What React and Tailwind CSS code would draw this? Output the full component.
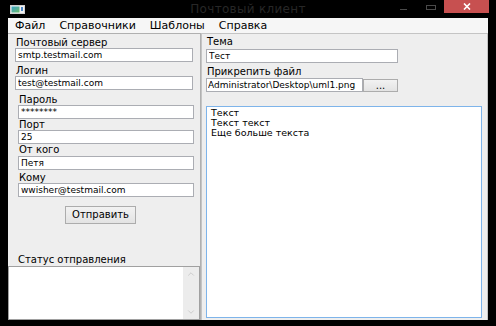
import React from "react";
import { ChevronUp, ChevronDown } from "lucide-react";

function Field({ label, value, className = "", labelClass = "", inputClass = "" }) {
  return (
    <div className={className}>
      <div className={`h-[11px] leading-[11px] ${labelClass}`}>{label}</div>
      <input
        readOnly
        value={value}
        className={`block h-[14px] border border-[#abadb3] bg-white px-[2px] text-[9px] outline-none ${inputClass}`}
      />
    </div>
  );
}

function TitleBar() {
  return (
    <div className="relative h-[18px] flex items-start">
      {/* app icon */}
      <svg className="ml-[10px] mt-[5px]" width="15" height="9" viewBox="0 0 15 9">
        <defs>
          <linearGradient id="ic" x1="0" y1="0" x2="1" y2="1">
            <stop offset="0" stopColor="#3aa3c9" />
            <stop offset="1" stopColor="#6dbb6a" />
          </linearGradient>
        </defs>
        <rect x="0.5" y="0.5" width="14" height="8" fill="#f2f2f2" stroke="#d0d0d0" />
        <rect x="1.5" y="1.5" width="8" height="6" fill="url(#ic)" />
        <rect x="11" y="2" width="2" height="4" fill="#4a87c8" />
      </svg>
      <div className="absolute left-0 right-0 top-[3px] text-center text-[12px] leading-[12px] text-[#272727] tracking-[0.3px]">
        Почтовый клиент
      </div>
      <div className="absolute left-[400px] top-[9px] w-[7px] h-[1px] bg-[#4a4a4a]" />
      <div className="absolute left-[426px] top-[5px] w-[10px] h-[5px] border border-[#4a4a4a]" />
      <div className="absolute left-[444px] top-0 w-[45px] h-[13px] bg-[#c75050] flex items-center justify-center">
        <svg width="8" height="7" viewBox="0 0 8 7">
          <path d="M1 0.5 L7 6.5 M7 0.5 L1 6.5" stroke="#fff" strokeWidth="1.6" />
        </svg>
      </div>
    </div>
  );
}

export default function App() {
  return (
    <div className="w-[496px] h-[326px] bg-black flex flex-col overflow-hidden font-['DejaVu_Sans',sans-serif] text-[10px] text-black">
      <TitleBar />
      <div className="mx-[8px] h-[302px] flex flex-col">
        {/* Menu */}
        <div className="h-[15px] bg-[#f6f6f6] flex items-center gap-[14px] pl-[7px] text-[11px] leading-[15px]">
          <span>Файл</span>
          <span>Справочники</span>
          <span>Шаблоны</span>
          <span>Справка</span>
        </div>

        <div className="flex-1 flex bg-[#eeeeee]">
          {/* Left panel */}
          <div className="w-[193px] border-t border-r border-[#b0b0b0] flex flex-col">
            <Field className="mt-[3px] pl-[7px]" labelClass="pl-[1px]" inputClass="w-[178px]" label="Почтовый сервер" value="smtp.testmail.com" />
            <Field className="mt-[3px] pl-[7px]" labelClass="pl-[1px]" inputClass="w-[178px]" label="Логин" value="test@testmail.com" />
            <Field className="mt-[4px] pl-[10px]" labelClass="pl-[1px]" inputClass="w-[176px]" label="Пароль" value="********" />
            <Field className="pl-[10px]" labelClass="pl-[1px]" inputClass="w-[176px]" label="Порт" value="25" />
            <Field className="pl-[10px]" labelClass="pl-[1px] mb-[1px]" inputClass="w-[176px]" label="От кого" value="Петя" />
            <Field className="mt-[2px] pl-[10px]" labelClass="pl-[1px]" inputClass="w-[176px]" label="Кому" value="wwisher@testmail.com" />

            <button className="mt-[9px] ml-[57px] w-[71px] h-[18px] border border-[#acacac] bg-gradient-to-b from-[#f2f2f2] to-[#e3e3e3] text-[10px] leading-[16px]">
              Отправить
            </button>

            <div className="mt-[30px] pl-[10px] h-[11px] leading-[11px]">Статус отправления</div>
            <div className="mt-[1px] flex-1 border border-[#a0a0a0] bg-white flex justify-end">
              <div className="w-[16px] bg-[#ececec] flex flex-col items-center justify-between py-[2px]">
                <ChevronUp size={10} color="#b8b8b8" strokeWidth={1.5} />
                <ChevronDown size={10} color="#b8b8b8" strokeWidth={1.5} />
              </div>
            </div>
          </div>

          {/* Right panel */}
          <div className="flex-1 border-t border-l border-r border-[#c4c4c4] pl-[4px] flex flex-col">
            <div className="mt-[2px] pl-[1px] h-[11px] leading-[11px]">Тема</div>
            <input
              readOnly
              value="Тест"
              className="mt-[2px] block w-[192px] h-[14px] border border-[#abadb3] bg-white px-[2px] text-[9px] outline-none"
            />
            <div className="mt-[3px] pl-[1px] h-[11px] leading-[11px]">Прикрепить файл</div>
            <div className="mt-[1px] flex items-center">
              <input
                readOnly
                value="Administrator\Desktop\uml1.png"
                className="block w-[157px] h-[14px] border border-[#abadb3] bg-white px-[1px] text-[9px] outline-none"
              />
              <button className="w-[35px] h-[13px] border border-[#acacac] bg-gradient-to-b from-[#f2f2f2] to-[#e3e3e3] text-[10px] leading-[9px]">
                ...
              </button>
            </div>
            <div className="mt-[14px] w-[276px] h-[212px] border border-[#7eb4ea] bg-white px-[4px] pt-[1px] text-[9.5px] leading-[10px]">
              <div>Текст</div>
              <div>Текст текст</div>
              <div>Еще больше текста</div>
            </div>
          </div>
        </div>
      </div>
    </div>
  );
}
